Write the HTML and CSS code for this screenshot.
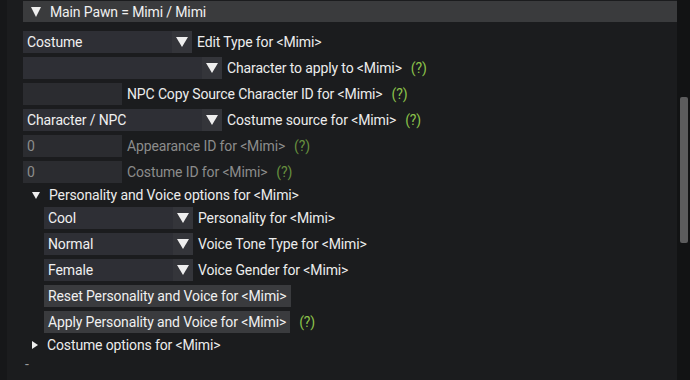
FILE: index.html
```html
<!DOCTYPE html>
<html lang="en">
<head>
  <meta charset="utf-8">
  <title>Main Pawn</title>
  <link rel="stylesheet" href="styles.css">
</head>
<body>
  <div class="window">
    <div class="gutter"></div>

    <div class="panel">
      <div class="header"><span class="arrow-down big"></span>Main Pawn = Mimi / Mimi</div>

      <div class="row first">
        <div class="combo w170"><span class="value">Costume</span><span class="drop"><span class="arrow-down"></span></span></div>
        <span class="label">Edit Type for &lt;Mimi&gt;</span>
      </div>
      <div class="row">
        <div class="combo w200"><span class="value"></span><span class="drop"><span class="arrow-down"></span></span></div>
        <span class="label">Character to apply to &lt;Mimi&gt;</span>
        <span class="help">(?)</span>
      </div>
      <div class="row">
        <div class="input w100"></div>
        <span class="label">NPC Copy Source Character ID for &lt;Mimi&gt;</span>
        <span class="help">(?)</span>
      </div>
      <div class="row">
        <div class="combo w200"><span class="value">Character / NPC</span><span class="drop"><span class="arrow-down"></span></span></div>
        <span class="label">Costume source for &lt;Mimi&gt;</span>
        <span class="help">(?)</span>
      </div>
      <div class="row disabled">
        <div class="input w100">0</div>
        <span class="label">Appearance ID for &lt;Mimi&gt;</span>
        <span class="help">(?)</span>
      </div>
      <div class="row disabled">
        <div class="input w100">0</div>
        <span class="label">Costume ID for &lt;Mimi&gt;</span>
        <span class="help">(?)</span>
      </div>

      <div class="tree"><span class="arrow-down small"></span>Personality and Voice options for &lt;Mimi&gt;</div>
      <div class="nested">
        <div class="row">
          <div class="combo w150"><span class="value">Cool</span><span class="drop"><span class="arrow-down"></span></span></div>
          <span class="label">Personality for &lt;Mimi&gt;</span>
        </div>
        <div class="row">
          <div class="combo w150"><span class="value">Normal</span><span class="drop"><span class="arrow-down"></span></span></div>
          <span class="label">Voice Tone Type for &lt;Mimi&gt;</span>
        </div>
        <div class="row">
          <div class="combo w150"><span class="value">Female</span><span class="drop"><span class="arrow-down"></span></span></div>
          <span class="label">Voice Gender for &lt;Mimi&gt;</span>
        </div>
        <div class="row">
          <button class="btn">Reset Personality and Voice for &lt;Mimi&gt;</button>
        </div>
        <div class="row">
          <button class="btn">Apply Personality and Voice for &lt;Mimi&gt;</button>
          <span class="help">(?)</span>
        </div>
      </div>
      <div class="tree"><span class="arrow-right"></span>Costume options for &lt;Mimi&gt;</div>
      <div class="dash">-</div>
    </div>

    <div class="scrollbar"><div class="thumb"></div></div>
  </div>
</body>
</html>
```

FILE: styles.css
```css
body {
  margin: 0;
  background: #1b1c1e;
  font-family: Roboto, "Liberation Sans", sans-serif;
  font-size: 14px;
  letter-spacing: -0.13px;
  color: #ececec;
  overflow: hidden;
}
.window {
  display: flex;
  width: 690px;
  height: 380px;
}
.gutter {
  width: 7px;
  background: #161719;
}
.panel {
  flex: 1;
  padding: 1px 0 0 16px;
}
.scrollbar {
  width: 13px;
  background: #121314;
  padding-top: 97px;
  box-sizing: border-box;
}
.thumb {
  width: 8px;
  height: 146px;
  margin-left: 3px;
  background: #5c5c5d;
  border-radius: 2px;
}
.header {
  height: 21px;
  background: #3a3b3d;
  display: flex;
  align-items: center;
  padding-left: 8px;
  color: #f0f0f0;
}
.row {
  display: flex;
  align-items: center;
  gap: 5px;
  height: 22px;
  margin-top: 4px;
}
.row.first {
  margin-top: 9px;
}
.combo {
  display: flex;
  height: 22px;
  background: #2e2f35;
}
.combo .value {
  flex: 1;
  padding-left: 4px;
  line-height: 22px;
  color: #f0f0f0;
}
.combo .drop {
  width: 20px;
  background: #34353a;
  display: flex;
  align-items: center;
  justify-content: center;
}
.w150 { width: 149px; }
.w170 { width: 169px; }
.w200 { width: 199px; }
.w100 { width: 99px; }
.input {
  height: 22px;
  line-height: 22px;
  padding-left: 4px;
  box-sizing: border-box;
  background: #2b2c30;
}
.label {
  color: #ececec;
}
.help {
  color: #8cc24a;
  margin-left: 4px;
}
.disabled .label,
.disabled .input {
  color: #8c8c8c;
}
.disabled .help {
  color: #67903e;
}
.btn {
  height: 22px;
  padding: 0 4px;
  border: none;
  background: #3a3b3e;
  color: #f0f0f0;
  font: inherit;
  letter-spacing: inherit;
}
.arrow-down {
  width: 0;
  height: 0;
  border-left: 6px solid transparent;
  border-right: 6px solid transparent;
  border-top: 10px solid #eeeeee;
}
.arrow-down.big {
  margin-right: 9px;
  border-left-width: 5px;
  border-right-width: 5px;
}
.arrow-down.small {
  border-left-width: 4px;
  border-right-width: 4px;
  border-top-width: 7px;
  margin: 0 9px 0 0;
}
.arrow-right {
  width: 0;
  height: 0;
  border-top: 4px solid transparent;
  border-bottom: 4px solid transparent;
  border-left: 6px solid #eeeeee;
  margin-right: 9px;
}
.tree {
  display: flex;
  align-items: center;
  height: 16px;
  margin-top: 4px;
  padding-left: 9px;
}
.nested {
  padding-left: 21px;
}
.dash {
  height: 16px;
  margin-top: 3px;
  padding-left: 2px;
  color: #9a9a9a;
  line-height: 16px;
}
```
